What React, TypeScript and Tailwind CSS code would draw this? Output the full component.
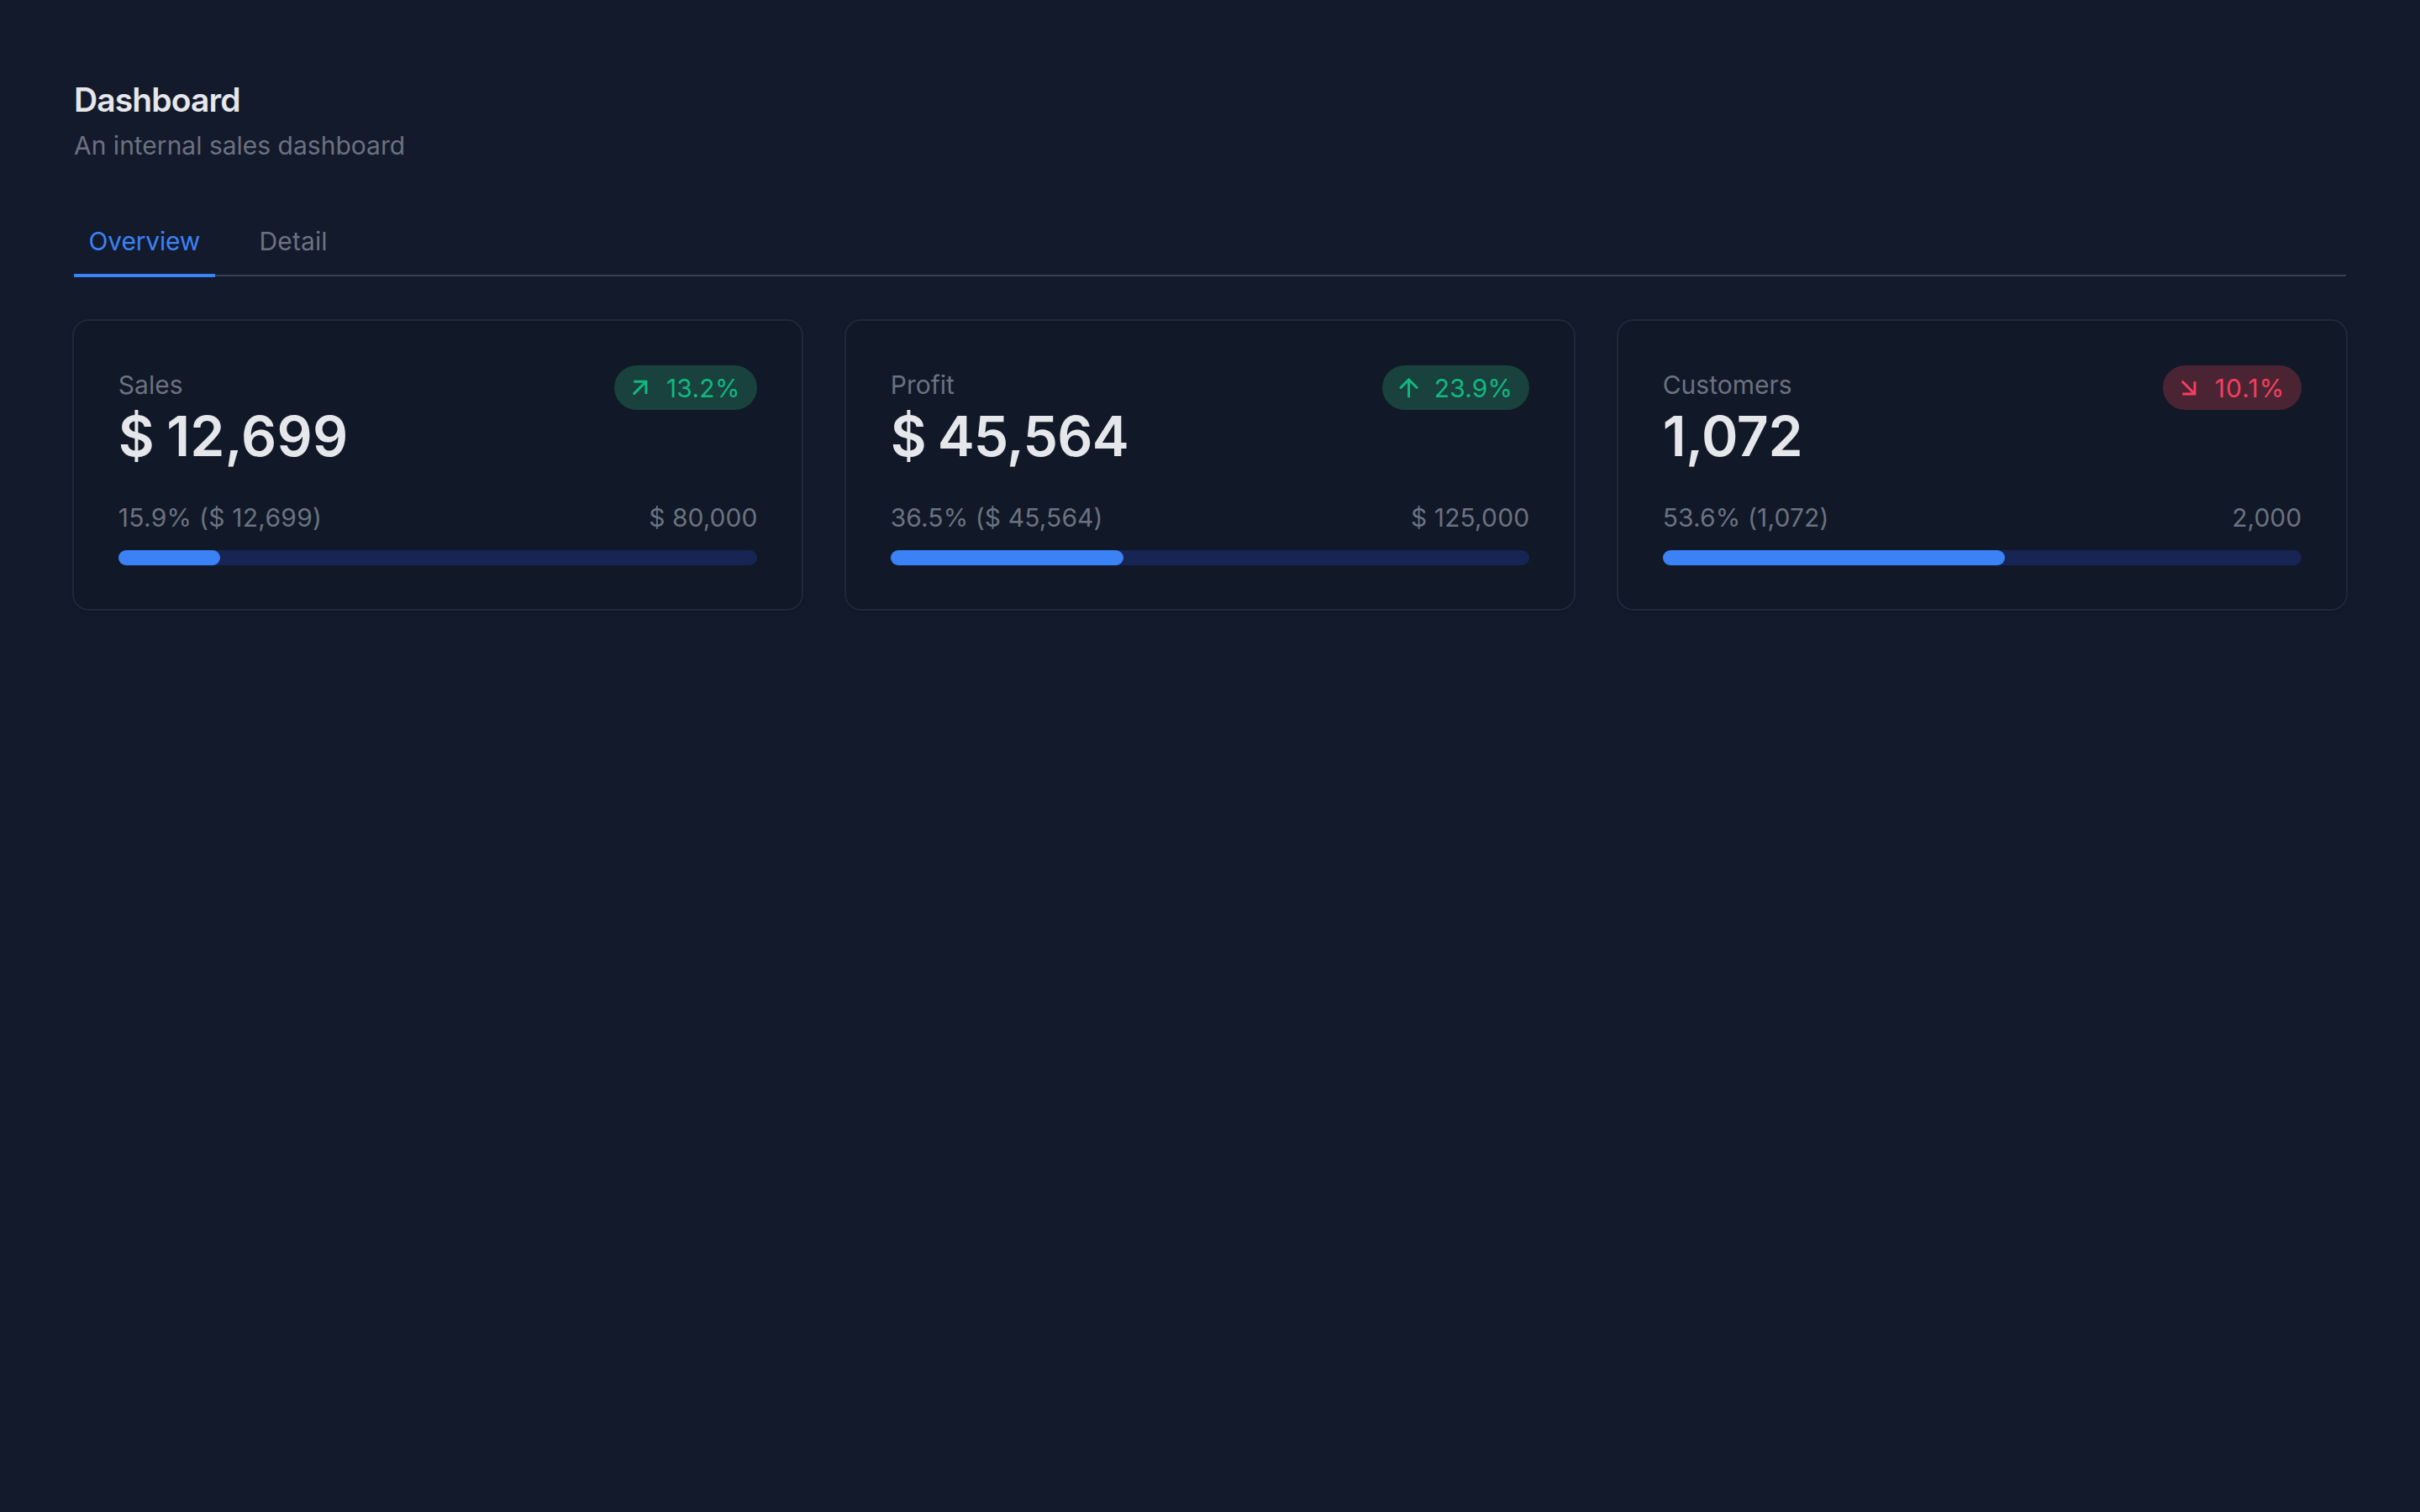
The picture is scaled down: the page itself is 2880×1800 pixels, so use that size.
import React from 'react';

type Delta = 'increase' | 'moderateIncrease' | 'moderateDecrease';

interface Kpi {
  title: string;
  metric: string;
  metricClass: string;
  progress: number;
  progressLabel: string;
  labelClass: string;
  target: string;
  targetClass: string;
  delta: string;
  deltaType: Delta;
  badgeClass: string;
  deltaClass: string;
}

const kpiData: Kpi[] = [
  {
    title: 'Sales',
    metric: '$ 12,699',
    metricClass: 'tracking-[0.2px] [word-spacing:-2.5px]',
    progress: 15.9,
    progressLabel: '15.9% ($ 12,699)',
    labelClass: 'tracking-[0.26px]',
    target: '$ 80,000',
    targetClass: '',
    delta: '13.2%',
    deltaType: 'moderateIncrease',
    badgeClass: 'w-[170px] gap-[13.8px] pl-[12.6px] bg-[#19413d] text-[#10b981]',
    deltaClass: 'tracking-[0.25px]',
  },
  {
    title: 'Profit',
    metric: '$ 45,564',
    metricClass: 'tracking-[-0.8px] [word-spacing:-2px]',
    progress: 36.5,
    progressLabel: '36.5% ($ 45,564)',
    labelClass: 'tracking-[0.1px]',
    target: '$ 125,000',
    targetClass: 'tracking-[0.12px]',
    delta: '23.9%',
    deltaType: 'increase',
    badgeClass: 'w-[175px] gap-[12.6px] pl-[13.8px] bg-[#19413d] text-[#10b981]',
    deltaClass: 'tracking-[0.13px]',
  },
  {
    title: 'Customers',
    metric: '1,072',
    metricClass: 'tracking-[-0.4px]',
    progress: 53.6,
    progressLabel: '53.6% (1,072)',
    labelClass: 'tracking-[0.15px]',
    target: '2,000',
    targetClass: '',
    delta: '10.1%',
    deltaType: 'moderateDecrease',
    badgeClass: 'w-[165px] gap-[13.4px] pl-[13px] bg-[#4b2434] text-[#f43f5e]',
    deltaClass: 'tracking-[1.1px]',
  },
];

const arrowPaths: Record<Delta, string> = {
  increase: 'M13 7.828V20h-2V7.828l-5.364 5.364-1.414-1.414L12 4l7.778 7.778-1.414 1.414L13 7.828z',
  moderateIncrease: 'M16.004 9.414l-8.607 8.607-1.414-1.414L14.589 8H7.004V6h11v11h-2V9.414z',
  moderateDecrease: 'M14.589 16.004L5.982 7.397l1.414-1.414 8.607 8.606V7.004h2v11h-11v-2h7.585z',
};

const BadgeDelta: React.FC<{ item: Kpi }> = ({ item }) => (
  <span className={`flex h-[53px] shrink-0 items-center rounded-full ${item.badgeClass}`}>
    <svg className="h-[35.2px] w-[35.2px] shrink-0" viewBox="0 0 24 24" fill="currentColor">
      <path d={arrowPaths[item.deltaType]} />
    </svg>
    <span className={`h-[44px] leading-[46px] whitespace-nowrap ${item.deltaClass}`}>{item.delta}</span>
  </span>
);

const KpiCard: React.FC<{ item: Kpi }> = ({ item }) => (
  <div className="rounded-[17.6px] bg-[#111827] px-[52.8px] pt-[53px] pb-[52px] shadow-[0_2px_6px_rgb(0_0_0/0.1),0_2px_4px_-2px_rgb(0_0_0/0.1)] ring-2 ring-[#1f2937]">
    <div className="flex items-start justify-between">
      <div>
        <p className="h-[44px] leading-[46px] text-[#6b7280]">{item.title}</p>
        <p className={`text-[66px] leading-[80px] font-semibold whitespace-nowrap text-[#e5e7eb] ${item.metricClass}`}>
          {item.metric}
        </p>
      </div>
      <BadgeDelta item={item} />
    </div>

    <div className="mt-[34px] flex h-[44px] justify-between leading-[46px] text-[#6b7280]">
      <p className={item.labelClass}>{item.progressLabel}</p>
      <p className={item.targetClass}>{item.target}</p>
    </div>

    <div className="mt-[18px] h-[18px] rounded-[9px] bg-[#172554]">
      <div className="h-full rounded-[9px] bg-[#3b82f6]" style={{ width: `${item.progress}%` }} />
    </div>
  </div>
);

const App: React.FC = () => {
  return (
    <main className="min-h-screen bg-[#131a2b] p-[88px] font-['Inter','Liberation_Sans',sans-serif] text-[30px] font-normal">
      {/* Header */}
      <h1 className="text-[39px] leading-[61.6px] font-semibold tracking-[-0.88px] text-[#e5e7eb]">Dashboard</h1>
      <p className="h-[44px] leading-[46px] text-[#6b7280]">An internal sales dashboard</p>

      {/* Tabs: the active underline overlaps the list border */}
      <div className="mt-[52.4px] flex h-[83px] gap-[35px] border-b-2 border-[#374151]">
        <button className="flex h-[84px] w-[168px] items-start border-b-4 border-[#3b82f6] pt-[18px] pl-[17.6px] leading-[46px] tracking-[-0.2px] text-[#3b82f6]">
          Overview
        </button>
        <button className="flex h-[81px] items-start pt-[18px] pl-[17.6px] leading-[46px] tracking-[0.1px] text-[#6b7280]">
          Detail
        </button>
      </div>

      {/* KPI cards */}
      <div className="mt-[53px] grid grid-cols-3 gap-[52.8px]">
        {kpiData.map((item) => (
          <KpiCard key={item.title} item={item} />
        ))}
      </div>
    </main>
  );
};

export default App;
